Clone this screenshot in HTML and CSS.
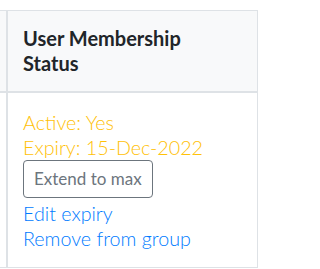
FILE: index.html
```html
<!DOCTYPE html>
<html lang="en">
<head>
<meta charset="utf-8">
<title>User Membership Status</title>
<link rel="stylesheet" href="styles.css">
</head>
<body>
<table class="members">
  <thead>
    <tr>
      <th class="stub"></th>
      <th class="col">User Membership<br>Status</th>
    </tr>
  </thead>
  <tbody>
    <tr>
      <td class="stub"></td>
      <td class="col">
        <div class="status">Active: Yes</div>
        <div class="status">Expiry: 15-Dec-2022</div>
        <button class="btn-outline" type="button">Extend to max</button>
        <a class="action" href="#">Edit expiry</a>
        <a class="action" href="#">Remove from group</a>
      </td>
    </tr>
  </tbody>
</table>
</body>
</html>
```

FILE: styles.css
```css
html, body {
  margin: 0;
  padding: 0;
  background: #ffffff;
}

body {
  padding-top: 10px;
  font-family: Lato, "Noto Sans", sans-serif;
  color: #212529;
}

.members {
  border-spacing: 0;
  border-collapse: separate;
}

.members th,
.members td {
  padding: 0;
  vertical-align: top;
  text-align: left;
}

.members .stub {
  width: 6px;
  min-width: 6px;
  max-width: 6px;
}

.members thead .stub {
  background: #f8f9fa;
  border-top: 1px solid #dee2e6;
  border-bottom: 2px solid #dee2e6;
}

.members tbody .stub {
  border-bottom: 1px solid #dee2e6;
}

.members .col {
  width: 234px;
  border-left: 2px solid #dee2e6;
  border-right: 1px solid #dee2e6;
  padding-left: 15px;
  padding-right: 0;
}

.members thead .col {
  background: #f8f9fa;
  border-top: 1px solid #dee2e6;
  border-bottom: 2px solid #dee2e6;
  padding-top: 15px;
  padding-bottom: 15px;
  font-size: 20px;
  line-height: 25px;
  font-weight: 700;
  color: #212529;
}

.members tbody .col {
  border-bottom: 1px solid #dee2e6;
  padding-top: 17px;
  padding-bottom: 16px;
  font-size: 19.7px;
  line-height: 25px;
  font-weight: 300;
}

.status {
  color: #ffc107;
}

.btn-outline {
  display: block;
  margin: 0 0 3px 0;
  padding: 6px 10px;
  font-family: Lato, "Noto Sans", sans-serif;
  font-size: 17px;
  line-height: 24px;
  font-weight: 400;
  color: #6c757d;
  background: transparent;
  border: 1px solid #6c757d;
  border-radius: 4px;
}

.action {
  display: block;
  color: #007bff;
  text-decoration: none;
}
```
